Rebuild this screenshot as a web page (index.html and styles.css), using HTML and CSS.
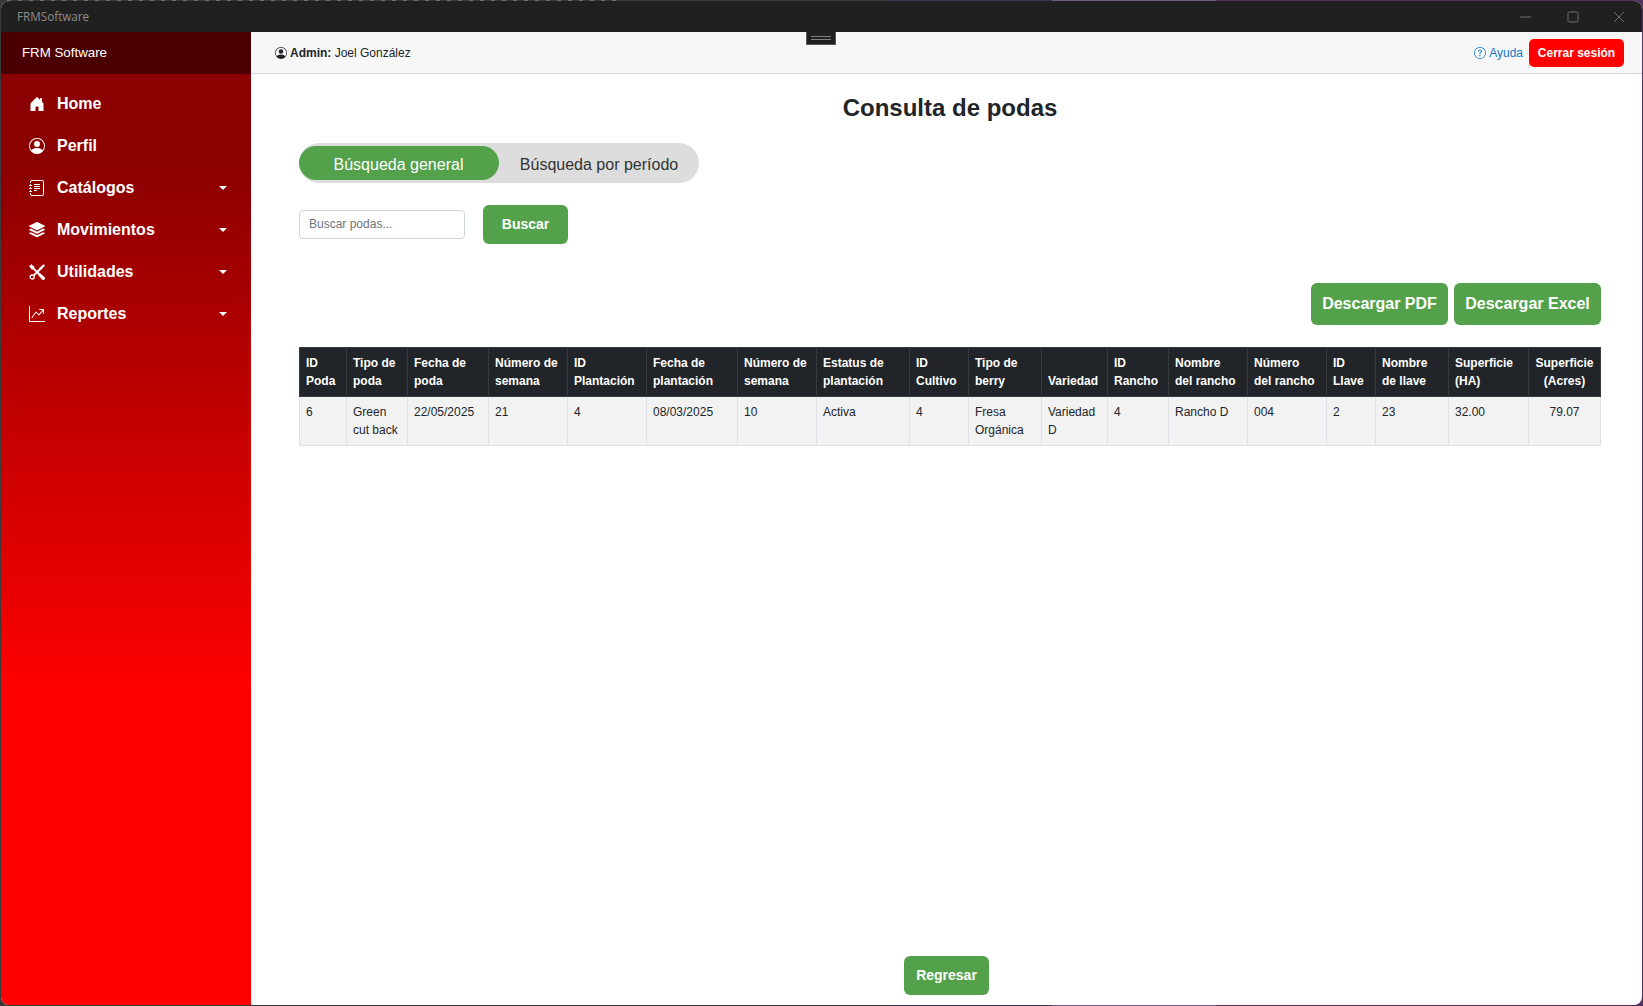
FILE: index.html
```html
<!DOCTYPE html>
<html lang="es">
<head>
<meta charset="utf-8">
<title>FRMSoftware</title>
<link rel="stylesheet" href="styles.css">
</head>
<body>
<div class="window">
  <div class="titlebar">
    <span class="app-name">FRMSoftware</span>
    <div class="win-controls">
      <svg class="win-btn" viewBox="0 0 12 12"><path d="M0 6h11" /></svg>
      <svg class="win-btn" viewBox="0 0 12 12"><rect x="1" y="1" width="10" height="10" rx="1.5" /></svg>
      <svg class="win-btn" viewBox="0 0 12 12"><path d="M1 1l10 10M11 1L1 11" /></svg>
    </div>
  </div>
  <div class="handle"><span class="handle-lines"></span></div>
  <div class="app">
    <aside class="sidebar">
      <div class="brand">FRM Software</div>
      <nav class="menu">
        <a class="menu-item"><svg class="menu-icon" viewBox="0 0 16 16"><path d="M6.5 14.5v-3.505c0-.245.25-.495.5-.495h2c.25 0 .5.25.5.5v3.5a.5.5 0 0 0 .5.5h4a.5.5 0 0 0 .5-.5v-7a.5.5 0 0 0-.146-.354L13 5.793V2.5a.5.5 0 0 0-.5-.5h-1a.5.5 0 0 0-.5.5v1.293L8.354 1.146a.5.5 0 0 0-.708 0l-6 6A.5.5 0 0 0 1.5 7.5v7a.5.5 0 0 0 .5.5h4a.5.5 0 0 0 .5-.5"/></svg><span class="menu-label">Home</span></a>
        <a class="menu-item"><svg class="menu-icon" viewBox="0 0 16 16"><path d="M11 6a3 3 0 1 1-6 0 3 3 0 0 1 6 0"/><path fill-rule="evenodd" d="M0 8a8 8 0 1 1 16 0A8 8 0 0 1 0 8m8-7a7 7 0 0 0-5.468 11.37C3.242 11.226 4.805 10 8 10s4.757 1.225 5.468 2.37A7 7 0 0 0 8 1"/></svg><span class="menu-label">Perfil</span></a>
        <a class="menu-item"><svg class="menu-icon" viewBox="0 0 16 16"><path d="M5 10.5a.5.5 0 0 1 .5-.5h2a.5.5 0 0 1 0 1h-2a.5.5 0 0 1-.5-.5m0-2a.5.5 0 0 1 .5-.5h5a.5.5 0 0 1 0 1h-5a.5.5 0 0 1-.5-.5m0-2a.5.5 0 0 1 .5-.5h5a.5.5 0 0 1 0 1h-5a.5.5 0 0 1-.5-.5m0-2a.5.5 0 0 1 .5-.5h5a.5.5 0 0 1 0 1h-5a.5.5 0 0 1-.5-.5"/><path d="M3 0h10a2 2 0 0 1 2 2v12a2 2 0 0 1-2 2H3a2 2 0 0 1-2-2v-1h1v1a1 1 0 0 0 1 1h10a1 1 0 0 0 1-1V2a1 1 0 0 0-1-1H3a1 1 0 0 0-1 1v1H1V2a2 2 0 0 1 2-2"/><path d="M1 5v-.5a.5.5 0 0 1 1 0V5h.5a.5.5 0 0 1 0 1h-2a.5.5 0 0 1 0-1zm0 3v-.5a.5.5 0 0 1 1 0V8h.5a.5.5 0 0 1 0 1h-2a.5.5 0 0 1 0-1zm0 3v-.5a.5.5 0 0 1 1 0v.5h.5a.5.5 0 0 1 0 1h-2a.5.5 0 0 1 0-1z"/></svg><span class="menu-label">Catálogos</span><span class="caret"></span></a>
        <a class="menu-item"><svg class="menu-icon" viewBox="0 0 16 16"><path d="m14.12 10.163 1.715.858c.22.11.22.424 0 .534L8.267 15.34a.6.6 0 0 1-.534 0L.165 11.555a.299.299 0 0 1 0-.534l1.716-.858 5.317 2.659c.505.252 1.1.252 1.604 0l5.317-2.66zM7.733.063a.6.6 0 0 1 .534 0l7.568 3.784a.3.3 0 0 1 0 .535L8.267 8.165a.6.6 0 0 1-.534 0L.165 4.382a.299.299 0 0 1 0-.535z"/><path d="m14.12 6.576 1.715.858c.22.11.22.424 0 .534l-7.568 3.784a.6.6 0 0 1-.534 0L.165 7.968a.299.299 0 0 1 0-.534l1.716-.858 5.317 2.659c.505.252 1.1.252 1.604 0z"/></svg><span class="menu-label">Movimientos</span><span class="caret"></span></a>
        <a class="menu-item"><svg class="menu-icon" viewBox="0 0 16 16"><circle class="tool-line thin" cx="3.2" cy="13" r="2"/><path class="tool-line" d="M4.6 11.6L12 4.2"/><path d="M10.6 3.8L14.6.2l1.4 1.4-3.6 4-2 .2z"/><path class="tool-line" d="M2.4 2.4L10.5 10.5"/><path d="M.2 2.2L2.2.2l3.2 2.6-.2 1.8-.8.8-1.8.2zM9.2 11.2l2-2 4.3 3.9c.7.7.7 1.7 0 2.4s-1.7.7-2.4 0z"/></svg><span class="menu-label">Utilidades</span><span class="caret"></span></a>
        <a class="menu-item"><svg class="menu-icon" viewBox="0 0 16 16"><path fill-rule="evenodd" d="M0 0h1v15h15v1H0zm10 3.5a.5.5 0 0 1 .5-.5h4a.5.5 0 0 1 .5.5v4a.5.5 0 0 1-1 0V4.9l-3.613 4.417a.5.5 0 0 1-.74.037L7.06 6.767l-3.656 5.027a.5.5 0 0 1-.808-.588l4-5.5a.5.5 0 0 1 .758-.06l2.609 2.61L13.445 4H10.5a.5.5 0 0 1-.5-.5"/></svg><span class="menu-label">Reportes</span><span class="caret"></span></a>
      </nav>
    </aside>
    <div class="main">
      <header class="topbar">
        <div class="user">
          <svg class="top-icon" viewBox="0 0 16 16"><path d="M11 6a3 3 0 1 1-6 0 3 3 0 0 1 6 0"/><path fill-rule="evenodd" d="M0 8a8 8 0 1 1 16 0A8 8 0 0 1 0 8m8-7a7 7 0 0 0-5.468 11.37C3.242 11.226 4.805 10 8 10s4.757 1.225 5.468 2.37A7 7 0 0 0 8 1"/></svg>
          <span><strong>Admin:</strong> Joel González</span>
        </div>
        <div class="top-actions">
          <a class="help"><svg class="top-icon" viewBox="0 0 16 16"><path d="M8 15A7 7 0 1 1 8 1a7 7 0 0 1 0 14m0 1A8 8 0 1 0 8 0a8 8 0 0 0 0 16"/><path d="M5.255 5.786a.237.237 0 0 0 .241.247h.825c.138 0 .248-.113.266-.25.09-.656.54-1.134 1.342-1.134.686 0 1.314.343 1.314 1.168 0 .635-.374.927-.965 1.371-.673.489-1.206 1.06-1.168 1.987l.003.217a.25.25 0 0 0 .25.246h.811a.25.25 0 0 0 .25-.25v-.105c0-.718.273-.927 1.01-1.486.609-.463 1.244-.977 1.244-2.056 0-1.511-1.276-2.241-2.673-2.241-1.267 0-2.655.59-2.75 2.286m1.557 5.763c0 .533.425.927 1.01.927.609 0 1.028-.394 1.028-.927 0-.552-.42-.94-1.029-.94-.584 0-1.009.388-1.009.94"/></svg>Ayuda</a>
          <button class="logout">Cerrar sesión</button>
        </div>
      </header>
      <main class="content">
        <h1 class="page-title">Consulta de podas</h1>
        <div class="toggle">
          <button class="toggle-opt active">Búsqueda general</button>
          <button class="toggle-opt">Búsqueda por período</button>
        </div>
        <div class="search-row">
          <input class="search-input" type="text" placeholder="Buscar podas...">
          <button class="btn btn-search">Buscar</button>
        </div>
        <div class="download-row">
          <button class="btn btn-download">Descargar PDF</button>
          <button class="btn btn-download excel">Descargar Excel</button>
        </div>
        <table class="data-table">
          <colgroup>
            <col class="c47"><col class="c61"><col class="c81"><col class="c79"><col class="c79"><col class="c91"><col class="c79"><col class="c93"><col class="c59"><col class="c73"><col class="c66"><col class="c61"><col class="c79"><col class="c79"><col class="c49"><col class="c73"><col class="c80"><col class="c72">
          </colgroup>
          <thead>
            <tr>
              <th>ID Poda</th><th>Tipo de poda</th><th>Fecha de poda</th><th>Número de semana</th><th>ID Plantación</th><th>Fecha de plantación</th><th>Número de semana</th><th>Estatus de plantación</th><th>ID Cultivo</th><th>Tipo de berry</th><th>Variedad</th><th>ID Rancho</th><th>Nombre del rancho</th><th>Número del rancho</th><th>ID Llave</th><th>Nombre de llave</th><th>Superficie (HA)</th><th class="center">Superficie (Acres)</th>
            </tr>
          </thead>
          <tbody>
            <tr>
              <td>6</td><td>Green cut back</td><td>22/05/2025</td><td>21</td><td>4</td><td>08/03/2025</td><td>10</td><td>Activa</td><td>4</td><td>Fresa Orgánica</td><td>Variedad D</td><td>4</td><td>Rancho D</td><td>004</td><td>2</td><td>23</td><td>32.00</td><td class="center">79.07</td>
            </tr>
          </tbody>
        </table>
        <div class="footer-row">
          <button class="btn btn-back">Regresar</button>
        </div>
      </main>
    </div>
  </div>
</div>
</body>
</html>
```
FILE: styles.css
```css
* { box-sizing: border-box; }

html, body { height: 100%; }

body {
  margin: 0;
  overflow: hidden;
  padding: 1px;
  font-family: "Liberation Sans", Arial, sans-serif;
  color: #212529;
  background:
    repeating-linear-gradient(to right, #707070 0, #707070 4px, #3a3a3a 4px, #3a3a3a 11px) 7px 0 / 610px 1px no-repeat,
    linear-gradient(to right, #3a3a3a 0, #3a3a3a 54%, #3d3357 54%, #3d3357 64%, #6f5a8a 64%, #6f5a8a 74%, #54305f 74%, #54305f 100%);
}

.window {
  position: relative;
  height: 100%;
  display: flex;
  flex-direction: column;
  overflow: hidden;
  border-radius: 8px;
  background: #fff;
}

.titlebar {
  flex: 0 0 31px;
  display: flex;
  align-items: center;
  justify-content: space-between;
  padding-left: 16px;
  background: #202020;
}

.app-name {
  padding-bottom: 1px;
  font-family: "Open Sans", sans-serif;
  font-size: 11.7px;
  color: #8c8c8c;
}

.win-controls {
  display: flex;
  align-items: center;
  gap: 34.5px;
  padding-right: 17px;
}

.win-btn {
  width: 12px;
  height: 12px;
  fill: none;
  stroke: #6e6e6e;
  stroke-width: 1;
}

.handle {
  position: absolute;
  top: 31px;
  left: 805px;
  width: 30px;
  height: 13px;
  display: flex;
  align-items: center;
  justify-content: center;
  background: #202020;
  border: 1px solid #5a5a5a;
  border-top: 0;
}

.handle-lines {
  width: 20px;
  height: 4px;
  border-top: 1px solid #808080;
  border-bottom: 1px solid #808080;
}

.app {
  flex: 1;
  display: flex;
  min-height: 0;
}

.sidebar {
  flex: 0 0 250px;
  display: flex;
  flex-direction: column;
  background: linear-gradient(to bottom, #8b0000 0, #8b0000 133px, #ff0000 665px, #ff0000 100%);
}

.brand {
  flex: 0 0 42px;
  display: flex;
  align-items: center;
  padding: 0 0 1px 21px;
  font-size: 13.3px;
  color: #fff;
  background: #4a0000;
}

.menu {
  display: flex;
  flex-direction: column;
  padding-top: 10px;
  gap: 2px;
}

.menu-item {
  height: 40px;
  display: flex;
  align-items: center;
  padding: 0 24px 0 28px;
  font-size: 16px;
  font-weight: 700;
  color: #fff;
}

.menu-icon {
  flex: 0 0 16px;
  width: 16px;
  height: 16px;
  margin-right: 12px;
  fill: #fff;
}

.tool-line {
  fill: none;
  stroke: #fff;
  stroke-width: 2;
}

.tool-line.thin { stroke-width: 1.3; }

.menu-label { flex: 1; }

.caret {
  width: 0;
  height: 0;
  border-top: 4px solid #fff;
  border-left: 4px solid transparent;
  border-right: 4px solid transparent;
}

.main {
  flex: 1;
  min-width: 0;
  display: flex;
  flex-direction: column;
}

.topbar {
  flex: 0 0 42px;
  display: flex;
  align-items: center;
  justify-content: space-between;
  padding: 0 18px 0 24px;
  background: #f7f7f7;
  border-bottom: 1px solid #d6d6d6;
  font-size: 12px;
}

.user, .help {
  display: flex;
  align-items: center;
}

.top-icon {
  width: 12px;
  height: 12px;
  margin-right: 3px;
  fill: currentColor;
}

.top-actions {
  display: flex;
  align-items: center;
  gap: 6px;
}

.help { color: #1677c5; }

.logout {
  height: 28px;
  width: 95px;
  padding: 0;
  border: 0;
  border-radius: 5px;
  background: #ff0000;
  color: #fff;
  font: 700 12px "Liberation Sans", Arial, sans-serif;
}

.content {
  flex: 1;
  min-height: 0;
  display: flex;
  flex-direction: column;
  padding: 19px 41px 10px 48px;
}

.page-title {
  margin: 0 0 21px;
  font-size: 24px;
  line-height: 29px;
  font-weight: 700;
  text-align: center;
}

.toggle {
  width: 400px;
  height: 40px;
  display: flex;
  align-items: center;
  border-radius: 20px;
  background: #dddddd;
}

.toggle-opt {
  flex: 0 0 200px;
  height: 34px;
  padding: 3px 0 0;
  border: 0;
  border-radius: 17px;
  background: transparent;
  color: #333;
  font: 16px "Liberation Sans", Arial, sans-serif;
}

.toggle-opt.active {
  padding-right: 1px;
  background: #54a14b;
  color: #fff;
}

.search-row {
  display: flex;
  align-items: center;
  gap: 18px;
  margin-top: 22px;
}

.search-input {
  width: 166px;
  height: 29px;
  padding: 0 9px 2px;
  border: 1px solid #ced4da;
  border-radius: 4px;
  font: 12px "Liberation Sans", Arial, sans-serif;
  color: #212529;
}

.search-input::placeholder { color: #6c757d; }

.btn {
  padding: 0;
  border: 0;
  border-radius: 6px;
  background: #54a14b;
  color: #fff;
  font-family: "Liberation Sans", Arial, sans-serif;
  font-weight: 700;
}

.btn-search {
  width: 85px;
  height: 39px;
  padding-bottom: 2px;
  font-size: 14px;
}

.download-row {
  display: flex;
  justify-content: flex-end;
  gap: 6px;
  margin-top: 39px;
}

.btn-download {
  width: 137px;
  height: 42px;
  font-size: 16px;
}

.btn-download.excel { width: 147px; }

.data-table {
  width: 1301px;
  margin-top: 22px;
  table-layout: fixed;
  border-collapse: collapse;
  font-size: 12px;
  line-height: 18px;
}

.c47 { width: 47px; }
.c49 { width: 49px; }
.c59 { width: 59px; }
.c61 { width: 61px; }
.c66 { width: 66px; }
.c72 { width: 72px; }
.c73 { width: 73px; }
.c79 { width: 79px; }
.c80 { width: 80px; }
.c81 { width: 81px; }
.c91 { width: 91px; }
.c93 { width: 93px; }

.data-table th, .data-table td {
  padding: 6px 6.8px 6px 6px;
  text-align: left;
}

.data-table th {
  vertical-align: bottom;
  background: #212529;
  color: #fff;
  border: 1px solid #373b3e;
}

.data-table td {
  vertical-align: top;
  background: #f2f2f2;
  border: 1px solid #dee2e6;
}

.data-table .center {
  padding-left: 6.4px;
  padding-right: 6.4px;
  text-align: center;
}

.footer-row {
  margin-top: auto;
  display: flex;
  justify-content: center;
  margin-left: -7px;
}

.btn-back {
  width: 85px;
  height: 39px;
  padding-bottom: 2px;
  font-size: 14px;
}
```
